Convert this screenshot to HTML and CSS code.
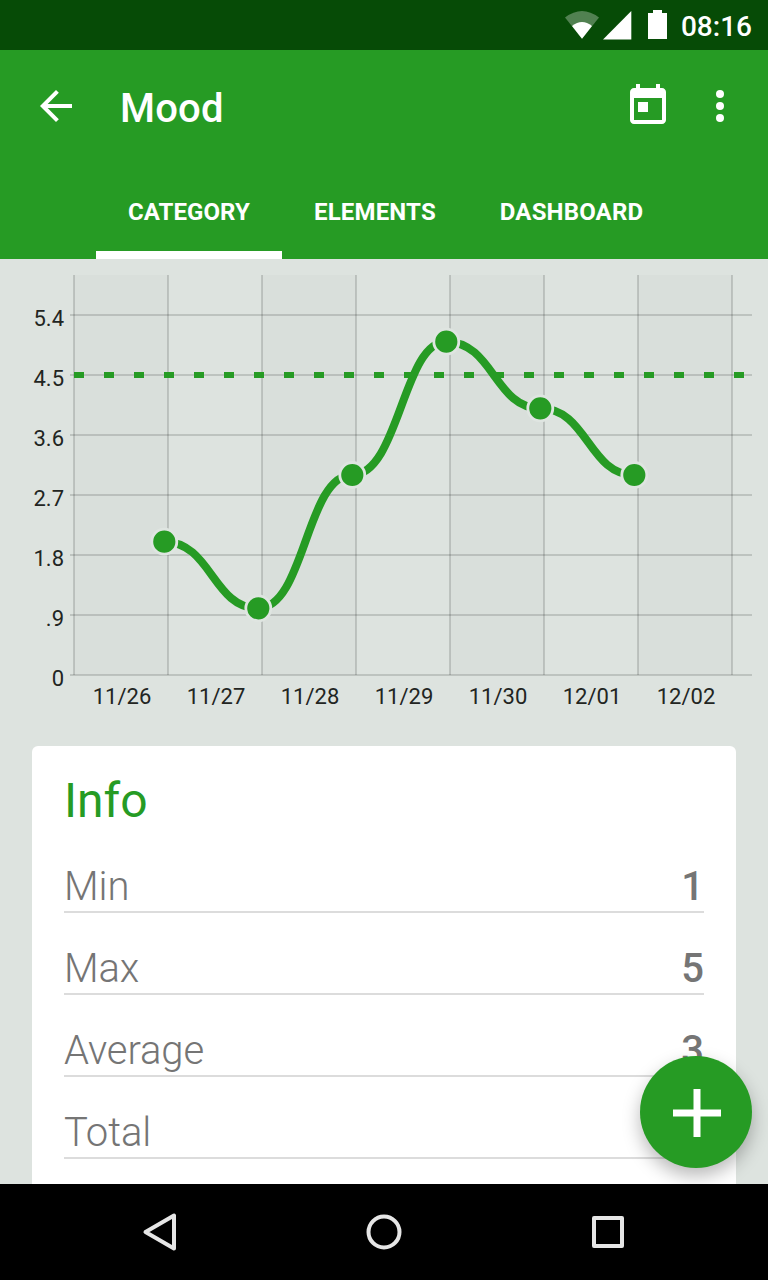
FILE: index.html
```html
<!DOCTYPE html>
<html lang="en">
<head>
  <meta charset="UTF-8">
  <meta name="viewport" content="width=device-width, initial-scale=1.0">
  <title>Mood</title>
  <link rel="stylesheet" href="styles.css">
</head>
<body>

<div class="status-bar">
  <svg class="wifi" width="36" height="30" viewBox="0 0 36 30">
    <path d="M1 7.500Q18-5.500 35 7.500L18 28.700Z" fill="#fff" fill-opacity="0.3"/>
    <path d="M8 16Q18 8 28 16L18 28.700Z" fill="#fff"/>
  </svg>
  <svg class="signal" width="29" height="29" viewBox="0 0 29 29">
    <path d="M0 28.500L28.300 0V28.500Z" fill="#fff"/>
  </svg>
  <svg class="battery" width="19" height="29" viewBox="0 0 19 29">
    <path d="M5 0h9v3h5v26H0V3h5z" fill="#fff"/>
  </svg>
  <span class="clock">08:16</span>
</div>

<header>
  <div class="toolbar">
    <svg class="back" width="48" height="48" viewBox="0 0 24 24" fill="#fff">
      <path d="M20 11H7.830l5.590-5.590L12 4l-8 8 8 8 1.410-1.410L7.830 13H20v-2z"/>
    </svg>
    <h1>Mood</h1>
    <svg class="today" width="48" height="48" viewBox="0 0 24 24" fill="#fff">
      <path d="M19 3h-1V1h-2v2H8V1H6v2H5c-1.110 0-1.990.9-1.990 2L3 19c0 1.100.89 2 2 2h14c1.100 0 2-.9 2-2V5c0-1.100-.9-2-2-2zm0 16H5V8h14v11zM7 10h5v5H7z"/>
    </svg>
    <svg class="more" width="48" height="48" viewBox="0 0 24 24" fill="#fff">
      <circle cx="12" cy="6" r="2"/>
      <circle cx="12" cy="12" r="2"/>
      <circle cx="12" cy="18" r="2"/>
    </svg>
  </div>
  <nav>
    <a href="#" class="active">CATEGORY</a>
    <a href="#">ELEMENTS</a>
    <a href="#">DASHBOARD</a>
  </nav>
</header>

<main>
  <svg class="chart" width="768" height="471" viewBox="0 259 768 471">
    <g class="bands">
      <rect x="74" y="275" width="94" height="400"/>
      <rect x="262" y="275" width="94" height="400"/>
      <rect x="450" y="275" width="94" height="400"/>
      <rect x="638" y="275" width="94" height="400"/>
    </g>
    <path class="grid" d="M74 275V675M168 275V675M262 275V675M356 275V675M450 275V675M544 275V675M638 275V675M732 275V675"/>
    <path class="grid" d="M70 315H752M70 375H752M70 435H752M70 495H752M70 555H752M70 615H752M70 675H752"/>
    <path class="goal" d="M74 375H752"/>
    <path class="line" d="M164 541.700C211 541.700 213 608.300 258 608.300C305 608.300 306 475 352 475C399 475 403 341.700 446 341.700C493 341.700 495 408.300 540 408.300C587 408.300 589 475 634 475"/>
    <g class="dots">
      <circle cx="164.300" cy="541.700" r="12.500"/>
      <circle cx="258.300" cy="608.300" r="12.500"/>
      <circle cx="352.300" cy="475" r="12.500"/>
      <circle cx="446.300" cy="341.700" r="12.500"/>
      <circle cx="540.300" cy="408.300" r="12.500"/>
      <circle cx="634.300" cy="475" r="12.500"/>
    </g>
    <g class="y-labels">
      <text x="64" y="326">5.4</text>
      <text x="64" y="386">4.5</text>
      <text x="64" y="446">3.6</text>
      <text x="64" y="506">2.7</text>
      <text x="64" y="566">1.8</text>
      <text x="64" y="626">.9</text>
      <text x="64" y="686">0</text>
    </g>
    <g class="x-labels">
      <text x="122" y="704">11/26</text>
      <text x="216" y="704">11/27</text>
      <text x="310" y="704">11/28</text>
      <text x="404" y="704">11/29</text>
      <text x="498" y="704">11/30</text>
      <text x="592" y="704">12/01</text>
      <text x="686" y="704">12/02</text>
    </g>
  </svg>

  <section class="card">
    <h2>Info</h2>
    <div class="row"><span>Min</span><b>1</b></div>
    <div class="row"><span>Max</span><b>5</b></div>
    <div class="row"><span>Average</span><b>3</b></div>
    <div class="row"><span>Total</span></div>
  </section>

  <button class="fab" aria-label="Add">
    <svg width="48" height="48" viewBox="0 0 48 48">
      <path d="M24 0V48M0 24H48" stroke="#fff" stroke-width="7"/>
    </svg>
  </button>
</main>

<footer>
  <svg width="48" height="48" viewBox="0 0 48 48">
    <path d="M9.500 24L38 7.500V40.500Z"/>
  </svg>
  <svg width="48" height="48" viewBox="0 0 48 48">
    <circle cx="24" cy="24" r="15.500"/>
  </svg>
  <svg width="48" height="48" viewBox="0 0 48 48">
    <rect x="10" y="10" width="28" height="28"/>
  </svg>
</footer>

</body>
</html>
```

FILE: styles.css
```css
* {
  box-sizing: border-box;
}

body {
  font-family: Roboto, sans-serif;
  margin: 0;
  height: 1280px;
  display: flex;
  flex-direction: column;
  overflow: hidden;
  background: #dde3df;
}

svg {
  display: block;
  flex: none;
}

/* Status bar */
.status-bar {
  height: 50px;
  flex: none;
  display: flex;
  justify-content: flex-end;
  align-items: flex-start;
  padding: 10px 16px 0 0;
  background: #064b06;
  color: #ffffff;
}

.signal {
  margin: 1px 0 0 3px;
}

.battery {
  margin-left: 16px;
}

.clock {
  margin-left: 14px;
  font-size: 28px;
  font-weight: 500;
  line-height: 34px;
}

/* Toolbar and tabs */
header {
  height: 209px;
  flex: none;
  background: #269b24;
  color: #ffffff;
}

.toolbar {
  height: 112px;
  display: flex;
  align-items: center;
  padding: 0 24px 0 32px;
}

.toolbar h1 {
  flex: 1;
  margin: 6px 0 0 40px;
  font-size: 40px;
  font-weight: 500;
  line-height: 48px;
  letter-spacing: 0.2px;
}

.more {
  margin-left: 24px;
}

nav {
  display: flex;
  height: 97px;
  padding-left: 96px;
}

nav a {
  padding: 0 32px;
  color: #ffffff;
  font-size: 24px;
  font-weight: 700;
  line-height: 100px;
  letter-spacing: 0.16px;
  text-decoration: none;
}

nav a.active {
  width: 186px;
  letter-spacing: 0.06px;
  box-shadow: inset 0 -8px #ffffff;
}

/* Chart */
main {
  flex: 1;
  min-height: 0;
  position: relative;
  overflow: hidden;
}

.bands {
  fill: #d9dfdb;
}

.grid {
  stroke: #000000;
  stroke-opacity: 0.14;
  stroke-width: 2;
}

.goal {
  stroke: #269b24;
  stroke-width: 6;
  stroke-dasharray: 10 20;
}

.line {
  fill: none;
  stroke: #269b24;
  stroke-width: 8;
}

.dots {
  fill: #269b24;
  stroke: #dfe5e1;
  stroke-width: 2.8;
}

.y-labels,
.x-labels {
  font-size: 22px;
  fill: #222522;
}

.y-labels {
  text-anchor: end;
}

.x-labels {
  text-anchor: middle;
}

/* Info card */
.card {
  height: 600px;
  margin: 16px 32px 0;
  padding: 27px 32px;
  border-radius: 6px;
  background: #ffffff;
}

.card h2 {
  margin: 0 0 2px;
  color: #269b24;
  font-size: 48px;
  font-weight: 400;
  line-height: 56px;
}

.row {
  display: flex;
  justify-content: space-between;
  align-items: flex-end;
  height: 82px;
  border-bottom: 2px solid #dcdcdc;
  color: #757575;
  font-size: 40px;
  font-weight: 300;
  line-height: 48px;
}

.row span {
  letter-spacing: -0.1px;
}

.row b {
  font-weight: 500;
}

.fab {
  position: absolute;
  right: 16px;
  bottom: 16px;
  width: 112px;
  height: 112px;
  padding: 2px 0 0 2px;
  display: flex;
  align-items: center;
  justify-content: center;
  border: none;
  border-radius: 50%;
  background: #269b24;
  box-shadow: 0 8px 18px rgba(0, 0, 0, 0.28);
}

/* Navigation bar */
footer {
  height: 96px;
  flex: none;
  display: flex;
  align-items: center;
  justify-content: center;
  gap: 176px;
  background: #000000;
}

footer svg {
  fill: none;
  stroke: #e6e6e6;
  stroke-width: 4;
  stroke-linejoin: round;
}
```
